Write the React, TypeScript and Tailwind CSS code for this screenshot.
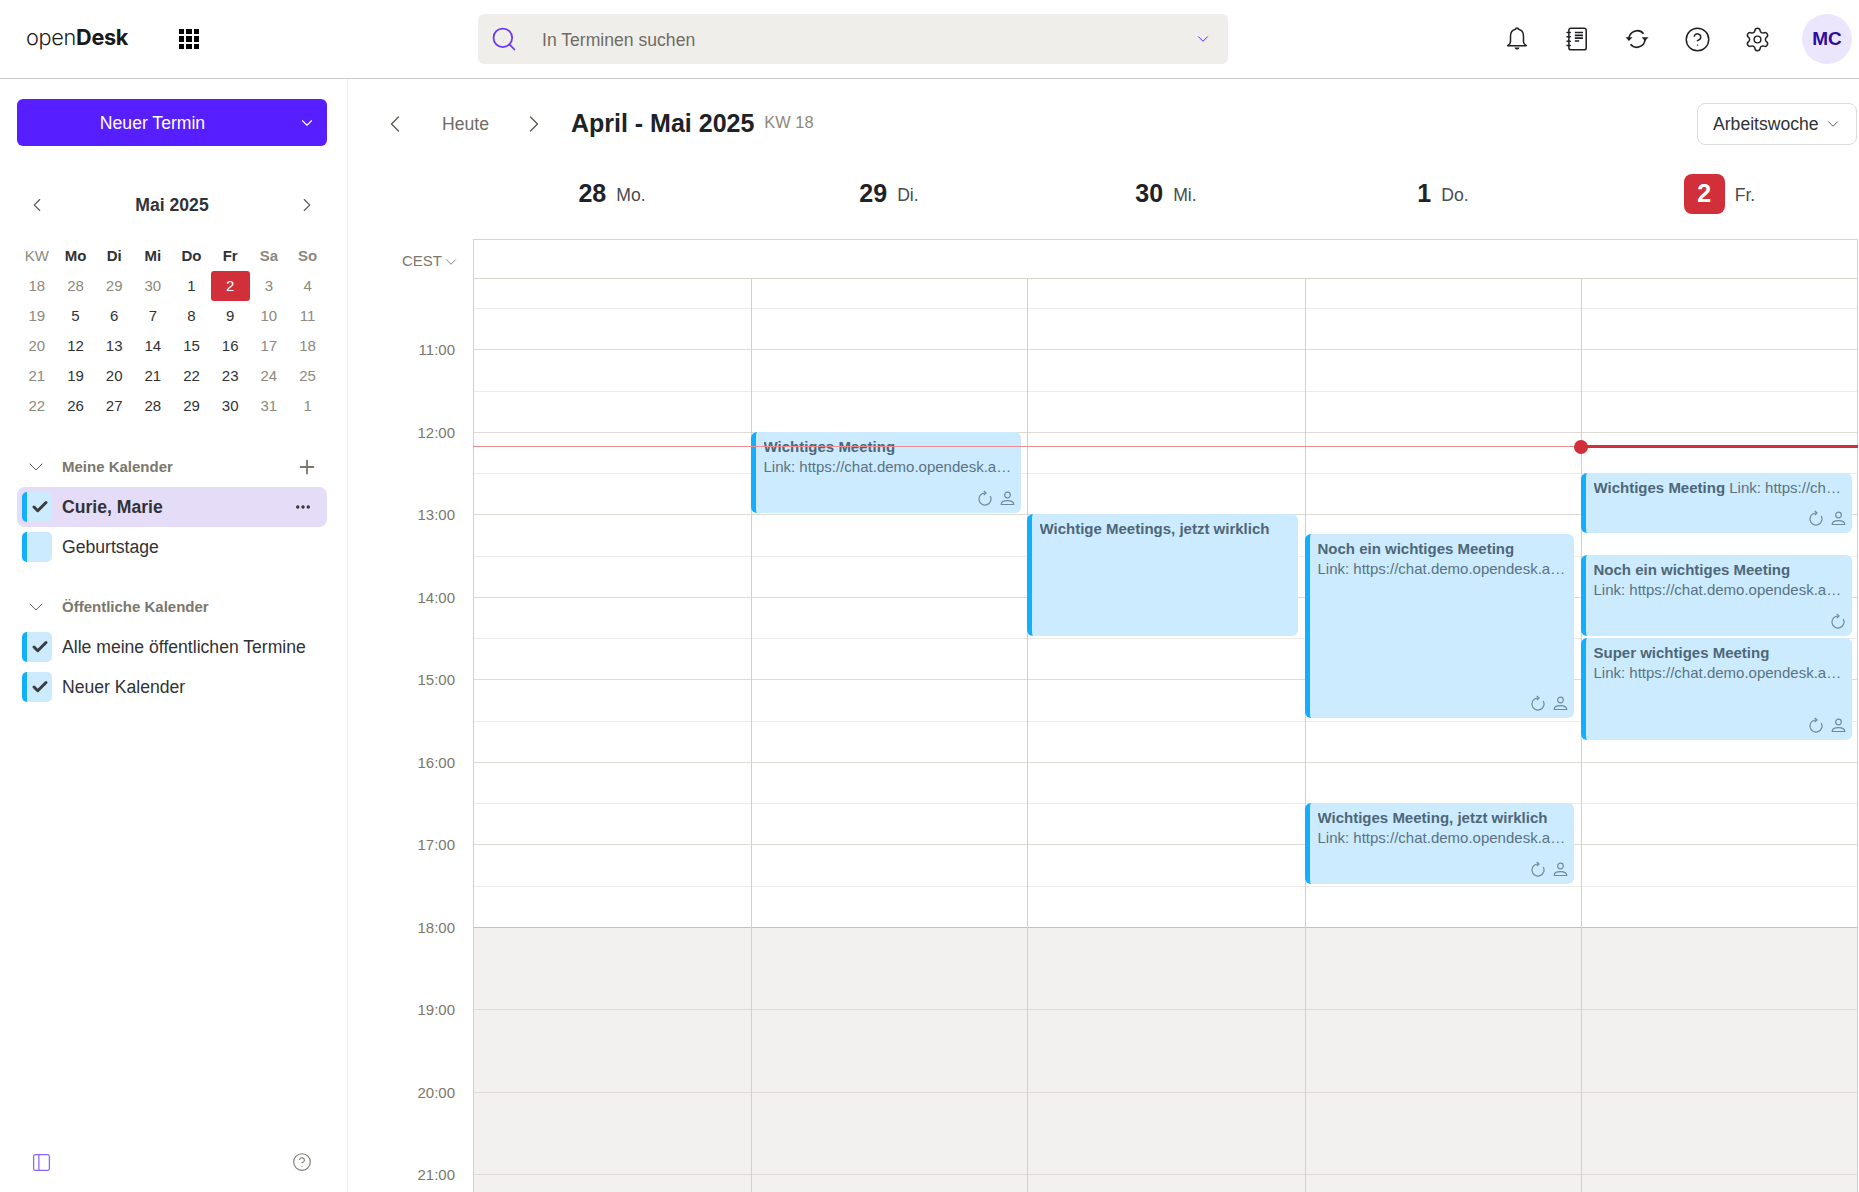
import React from "react";
import { CircleHelp, Settings, Search, ChevronDown, ChevronLeft, ChevronRight, Check, Plus, Ellipsis, PanelLeft } from "lucide-react";

const BellIcon = () => (
  <svg width="26" height="26" viewBox="0 0 24 24" fill="none" stroke="#1f2123" strokeWidth="1.4" strokeLinejoin="round">
    <path d="M12 1.8c.8 0 1.3.5 1.4 1.3 3 .7 4.6 3.3 4.6 6.4v5c0 1.6 1 2.7 2.6 3.7H3.4C5 17.2 6 16.1 6 14.5v-5c0-3.1 1.6-5.7 4.6-6.4.1-.8.6-1.3 1.4-1.3z" />
    <path d="M9.6 19.8h4.8c-.4 1.2-1.3 1.9-2.4 1.9s-2-.7-2.4-1.9z" fill="#1f2123" stroke="none" />
  </svg>
);

const Notebook = () => (
  <svg width="26" height="26" viewBox="0 0 24 24" fill="none" stroke="#1f2123" strokeWidth="1.4" strokeLinecap="round">
    <rect x="4.5" y="2" width="16" height="20" rx="2" />
    <path d="M2.8 6h3M2.8 10h3M2.8 14h3M2.8 18h3" />
    <path d="M10 6h7.5M10 8.6h7.5M10 11.2h7.5M10 13.8h4" strokeWidth="1.5" strokeLinecap="butt" />
  </svg>
);

const Sync = () => (
  <svg width="26" height="26" viewBox="0 0 24 24" fill="none" stroke="#1f2123" strokeWidth="1.5">
    <path d="M4.6 11.5a7.6 7.6 0 0 1 13.4-4.4" />
    <path d="M19.4 12.5a7.6 7.6 0 0 1-13.4 4.4" />
    <path d="M16.2 10.4h6.4l-3.2 3.4z" fill="#1f2123" stroke="none" />
    <path d="M1.4 10.4h6.4l-3.2 3.4z" fill="#1f2123" stroke="none" />
  </svg>
);

const Repeat = () => (
  <svg width="16" height="16" viewBox="0 0 16 16" fill="none" stroke="#6f8b9b" strokeWidth="1.2">
    <path d="M13.2 6A6 6 0 1 1 8 3" />
    <path d="M6.8 1 9 3 6.8 5" />
  </svg>
);

const Person = () => (
  <svg width="15" height="15" viewBox="0 0 15 15" fill="none" stroke="#6f8b9b" strokeWidth="1.2">
    <circle cx="7.5" cy="4" r="2.8" />
    <path d="M1.2 13.5c0-2.6 2.4-3.8 6.3-3.8s6.3 1.2 6.3 3.8z" />
  </svg>
);

const AppGrid = () => (
  <div className="grid grid-cols-3 gap-[2px] w-[20px]">
    {Array.from({ length: 9 }).map((_, i) => (
      <div key={i} className="w-[5.33px] h-[5.33px] bg-black" />
    ))}
  </div>
);

const Box = ({ checked }: { checked: boolean }) => (
  <div className="w-[30px] h-[30px] shrink-0 rounded-[5px] bg-[#cdebfe] border-l-[5px] border-[#12aeff] flex items-center justify-center">
    {checked && <Check size={18} strokeWidth={4} color="#3a3c40" />}
  </div>
);

const CalRow = ({ label, checked, active }: { label: string; checked: boolean; active?: boolean }) => (
  <div className={`h-[40px] ml-[17px] w-[310px] pl-[5px] pr-[15px] flex items-center rounded-[8px] ${active ? "bg-[#e5dcf7] font-bold" : ""}`}>
    <Box checked={checked} />
    <span className="ml-[10px] text-[17.6px] text-[#303236] flex-1 whitespace-nowrap">{label}</span>
    {active && <Ellipsis size={18} strokeWidth={2.5} color="#303236" />}
  </div>
);

const SectionHead = ({ label, plus }: { label: string; plus?: boolean }) => (
  <div className="h-[40px] pl-[24px] pr-[29px] flex items-center">
    <ChevronDown size={24} strokeWidth={1} color="#5d5a52" />
    <span className="ml-[14px] text-[15px] font-bold text-[#7b776c] flex-1">{label}</span>
    {plus && <Plus size={22} strokeWidth={2} color="#7b776c" />}
  </div>
);

const weeks: { n: string; cls: string }[][] = [
  ["18", "28", "29", "30", "1", "2", "3", "4"],
  ["19", "5", "6", "7", "8", "9", "10", "11"],
  ["20", "12", "13", "14", "15", "16", "17", "18"],
  ["21", "19", "20", "21", "22", "23", "24", "25"],
  ["22", "26", "27", "28", "29", "30", "31", "1"],
].map((w, r) =>
  w.map((n, c) => {
    const dim = c === 0 || c >= 6 || (r === 0 && c < 4);
    return { n, cls: dim ? "text-[#8d897d]" : "text-[#303236]" };
  })
);

const MiniCal = () => (
  <div className="ml-[17.5px] w-[309.4px] grid grid-cols-8 text-[15px] text-center">
    {["KW", "Mo", "Di", "Mi", "Do", "Fr", "Sa", "So"].map((d, i) => (
      <div
        key={d}
        className={`h-[30px] flex items-center justify-center ${
          i === 0 ? "text-[#8d897d]" : i >= 6 ? "font-bold text-[#8d897d]" : "font-bold text-[#303236]"
        }`}
      >
        {d}
      </div>
    ))}
    {weeks.flat().map((d, i) => (
      <div key={i} className="h-[30px] flex items-center justify-center">
        {i === 5 ? (
          <div className="w-[39px] h-[30px] rounded-[3px] bg-[#d1303a] text-white flex items-center justify-center">{d.n}</div>
        ) : (
          <span className={d.cls}>{d.n}</span>
        )}
      </div>
    ))}
  </div>
);

const Sidebar = () => (
  <aside className="w-[348px] shrink-0 border-r border-[#eeedeb] flex flex-col">
    <button className="mt-[20px] ml-[17px] w-[310px] h-[47px] rounded-[6px] bg-[#571fff] text-white text-[17.6px] flex items-center shrink-0">
      <span className="flex-1 pl-[13px] pr-[23px] pt-[1px] text-center">Neuer Termin</span>
      <ChevronDown size={18} strokeWidth={1.5} color="#ffffff" className="mr-[11px]" />
    </button>
    <div className="mt-[44px] h-[30px] pl-[26px] pr-[29px] flex items-center justify-between shrink-0">
      <ChevronLeft size={22} strokeWidth={1.2} color="#5d5a52" />
      <span className="text-[17.6px] font-bold text-[#303236]">Mai 2025</span>
      <ChevronRight size={22} strokeWidth={1.2} color="#5d5a52" />
    </div>
    <div className="mt-[21px]">
      <MiniCal />
    </div>
    <div className="mt-[26px]">
      <SectionHead label="Meine Kalender" plus />
      <CalRow label="Curie, Marie" checked active />
      <CalRow label="Geburtstage" checked={false} />
    </div>
    <div className="mt-[20px]">
      <SectionHead label="Öffentliche Kalender" />
      <CalRow label="Alle meine öffentlichen Termine" checked />
      <CalRow label="Neuer Kalender" checked />
    </div>
    <div className="mt-auto h-[58px] pl-[31px] pr-[35px] pb-[2px] flex items-center justify-between shrink-0">
      <PanelLeft size={21} strokeWidth={1.4} color="#8a63ff" />
      <CircleHelp size={20} strokeWidth={1.3} color="#7b776c" />
    </div>
  </aside>
);

type Ev = { top: number; h: number; w: number; title: string; link?: string; inline?: boolean; repeat?: boolean; person?: boolean };

const LINK = "Link: https://chat.demo.opendesk.aus.wichtig.de/meeting";

const days: { n: string; name: string; today?: boolean; evs: Ev[] }[] = [
  { n: "28", name: "Mo.", evs: [] },
  { n: "29", name: "Di.", evs: [{ top: 153, h: 81, w: 270, title: "Wichtiges Meeting", link: LINK, repeat: true, person: true }] },
  { n: "30", name: "Mi.", evs: [{ top: 235, h: 122, w: 271, title: "Wichtige Meetings, jetzt wirklich" }] },
  {
    n: "1",
    name: "Do.",
    evs: [
      { top: 255, h: 184, w: 269, title: "Noch ein wichtiges Meeting", link: LINK, repeat: true, person: true },
      { top: 524, h: 81, w: 269, title: "Wichtiges Meeting, jetzt wirklich", link: LINK, repeat: true, person: true },
    ],
  },
  {
    n: "2",
    name: "Fr.",
    today: true,
    evs: [
      { top: 194, h: 60, w: 271, title: "Wichtiges Meeting", link: LINK, inline: true, repeat: true, person: true },
      { top: 276, h: 81, w: 271, title: "Noch ein wichtiges Meeting", link: LINK, repeat: true },
      { top: 359, h: 102, w: 271, title: "Super wichtiges Meeting", link: LINK, repeat: true, person: true },
    ],
  },
];

const EventCard = ({ e }: { e: Ev }) => (
  <div
    className="absolute -left-[1px] z-10 rounded-[6px] bg-[#cdebfe] border-l-[5px] border-[#12aeff] pl-[7.5px] pr-[8px] pt-[5px] text-[15px] leading-[20px] text-[#5a7383]"
    style={{ top: e.top, height: e.h, width: e.w }}
  >
    {e.inline ? (
      <div className="truncate">
        <span className="font-bold text-[#4d6778]">{e.title}</span> {e.link}
      </div>
    ) : (
      <>
        <div className="truncate font-bold text-[#4d6778]">{e.title}</div>
        {e.link && <div className="truncate">{e.link}</div>}
      </>
    )}
    {(e.repeat || e.person) && (
      <div className="absolute right-[6px] bottom-[7px] flex items-center gap-[7px]">
        {e.repeat && <Repeat />}
        {e.person && <Person />}
      </div>
    )}
  </div>
);

const hourLabels = ["11:00", "12:00", "13:00", "14:00", "15:00", "16:00", "17:00", "18:00", "19:00", "20:00", "21:00"];
const slots = Array.from({ length: 27 }).map((_, i) => i);

const DayColumn = ({ evs, last }: { evs: Ev[]; last: boolean }) => (
  <div className={`relative border-l border-[#d3d0ca] ${last ? "border-r" : ""}`}>
    <div className="h-[30px] border-b border-[#ecebe7]" />
    {slots.map((i) => {
      const hourLine = i % 2 === 0;
      const off = i >= 15;
      return (
        <div
          key={i}
          className={`h-[41.25px] border-b ${i === 14 ? "border-[#c4c3c0]" : hourLine ? "border-[#dedbd5]" : "border-[#ecebe7]"} ${
            off ? "bg-[#f2f1ef]" : ""
          } ${off && !hourLine ? "border-transparent" : ""}`}
        />
      );
    })}
    {evs.map((e) => (
      <EventCard key={e.title + e.top} e={e} />
    ))}
  </div>
);

export default function App() {
  return (
    <div className="h-screen w-full overflow-hidden bg-white flex flex-col font-['Liberation_Sans',Arial,sans-serif] text-[#303236]">
      <header className="h-[79px] shrink-0 border-b border-[#c9cbcd] flex items-center">
        <div className="ml-[26px] w-[153px] pb-[2px] text-[21.7px] leading-none text-[#1a1a1a] font-['Inter',sans-serif] tracking-[-0.3px]">
          <span className="font-light">open</span>
          <span className="font-bold">Desk</span>
        </div>
        <AppGrid />
        <div className="ml-[279px] w-[750px] h-[50px] rounded-[6px] bg-[#efeeeb] flex items-center pl-[12px] pr-[16px]">
          <Search size={28} strokeWidth={1.5} color="#6a38f5" />
          <span className="ml-[24px] flex-1 pt-[2px] text-[17.6px] text-[#6f6c63]">In Terminen suchen</span>
          <ChevronDown size={18} strokeWidth={1.3} color="#571fff" />
        </div>
        <div className="ml-auto flex items-center">
          <div className="flex items-center">
            <div className="w-[60px] flex justify-center"><BellIcon /></div>
            <div className="w-[60px] flex justify-center"><Notebook /></div>
            <div className="w-[60px] flex justify-center"><Sync /></div>
            <div className="w-[60px] flex justify-center"><CircleHelp size={27} strokeWidth={1.3} color="#1f2123" /></div>
            <div className="w-[60px] flex justify-center"><Settings size={27} strokeWidth={1.3} color="#1f2123" /></div>
          </div>
          <div className="ml-[15px] mr-[7px] w-[50px] h-[50px] rounded-full bg-[#ece6fd] flex items-center justify-center text-[19px] font-bold text-[#2f0d9c]">
            MC
          </div>
        </div>
      </header>
      <div className="flex-1 min-h-0 flex">
        <Sidebar />
        <main className="flex-1 min-w-0 flex flex-col pr-[1px]">
          <div className="h-[65px] mt-[24px] shrink-0 flex items-start">
            <div className="h-[41px] flex items-center">
              <ChevronLeft size={28} strokeWidth={1.2} color="#5d5a52" className="ml-[33px]" />
              <span className="ml-[33px] pt-[1px] text-[17.6px] text-[#6f6c63]">Heute</span>
              <ChevronRight size={28} strokeWidth={1.2} color="#5d5a52" className="ml-[31px]" />
              <span className="ml-[23px] pt-[1px] text-[25px] font-bold text-[#202326]">April - Mai 2025</span>
              <span className="ml-[10px] text-[16.4px] text-[#8d897d] mb-[2px]">KW 18</span>
            </div>
            <div className="ml-auto mr-[1px] h-[42px] w-[160px] rounded-[8px] border border-[#dcdcdc] flex items-center pl-[15px] text-[17.6px] text-[#303236]">
              <span className="flex-1">Arbeitswoche</span>
              <ChevronDown size={18} strokeWidth={1.3} color="#5d5a52" className="mr-[14px]" />
            </div>
          </div>
          <div className="h-[71px] shrink-0 pl-[125px] pb-[19px] grid grid-cols-[278px_276px_278px_276px_277px]">
            {days.map((d) => (
              <div key={d.n} className="flex items-center justify-center">
                {d.today ? (
                  <div className="w-[41px] h-[40px] rounded-[8px] bg-[#d1303a] text-white text-[25px] font-bold flex items-center justify-center">{d.n}</div>
                ) : (
                  <span className="text-[25px] font-bold text-[#202326]">{d.n}</span>
                )}
                <span className="ml-[10px] mt-[3px] text-[17.6px] text-[#4a4c50]">{d.name}</span>
              </div>
            ))}
          </div>
          <div className="h-[40px] shrink-0 flex">
            <div className="w-[125px] pl-[54px] pt-[5px] flex items-center text-[15px] text-[#7b776c]">
              CEST
              <ChevronDown size={18} strokeWidth={1} color="#5d5a52" />
            </div>
            <div className="w-[1385px] border border-[#d8d5ce]" />
          </div>
          <div className="flex-1 min-h-0 overflow-hidden flex">
            <div className="w-[125px] shrink-0 pr-[18px] flex flex-col items-end text-[15px] text-[#7b776c] pt-[30px]">
              {hourLabels.map((h) => (
                <div key={h} className="h-[82.5px] shrink-0 flex items-center">{h}</div>
              ))}
            </div>
            <div className="relative w-[1385px] shrink-0 grid grid-cols-[278px_276px_278px_276px_277px] self-start">
              {days.map((d, i) => (
                <DayColumn key={d.n} evs={d.evs} last={i === 4} />
              ))}
              <div className="absolute z-20 left-0 right-0 top-[167px] h-0">
                <div className="absolute left-0 w-[1108px] h-[1px] bg-[#e58f95]" />
                <div className="absolute left-[1108px] right-0 -top-[1px] h-[3px] bg-[#d1303a]" />
                <div className="absolute left-[1101px] -top-[6.5px] w-[14px] h-[14px] rounded-full bg-[#d1303a]" />
              </div>
            </div>
          </div>
        </main>
      </div>
    </div>
  );
}
